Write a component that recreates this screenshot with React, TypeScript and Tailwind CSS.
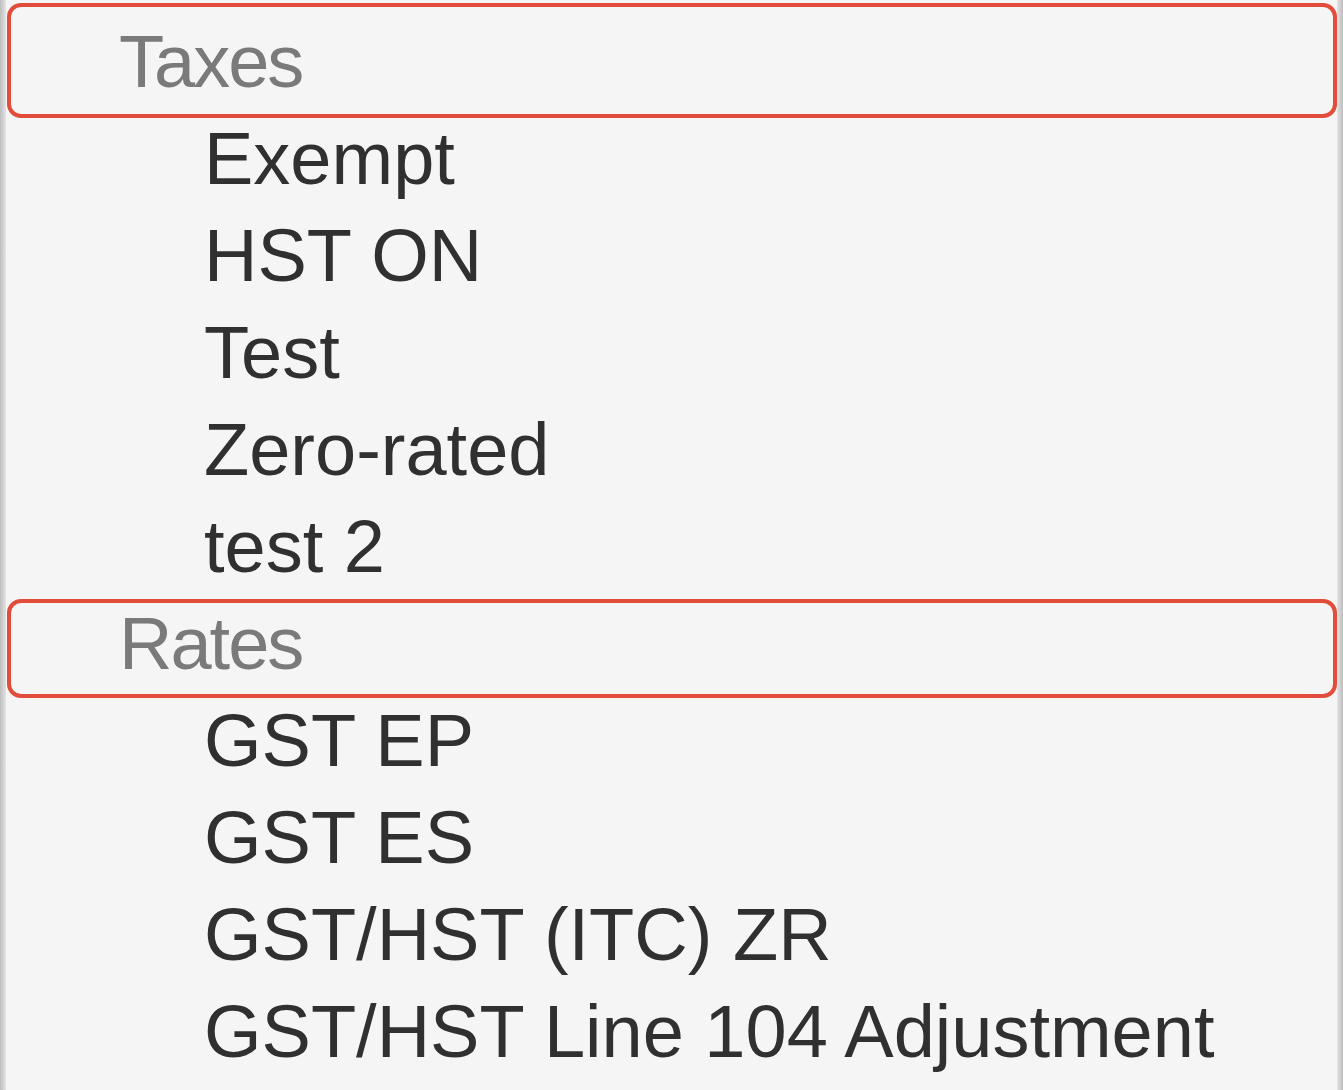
import React from 'react'

interface Section {
  title: string
  items: string[]
  // where the red annotation frame sits around the header row
  frame: { top: number; bottom: number }
}

const sections: Section[] = [
  {
    title: 'Taxes',
    items: ['Exempt', 'HST ON', 'Test', 'Zero-rated', 'test 2'],
    frame: { top: -10, bottom: -8 },
  },
  {
    title: 'Rates',
    items: ['GST EP', 'GST ES', 'GST/HST (ITC) ZR', 'GST/HST Line 104 Adjustment'],
    frame: { top: 4, bottom: -6 },
  },
]

function Header({ title, frame }: { title: string; frame: Section['frame'] }) {
  return (
    <div className="relative h-[97px] leading-[97px] pl-[113px] text-[74px] tracking-[-2px] text-[#7a7a7a]">
      {title}
      <span
        className="pointer-events-none absolute left-[1px] right-0 rounded-[14px] border-[4px] border-[#e24c3b]"
        style={{ top: frame.top, bottom: frame.bottom }}
      />
    </div>
  )
}

export default function App() {
  return (
    <div
      className="flex w-[1343px] h-[1090px] overflow-hidden bg-[#f5f5f5]"
      style={{ fontFamily: '"Liberation Sans", Arial, sans-serif' }}
    >
      <div className="w-[6px] shrink-0 bg-gradient-to-r from-[#bdbdbd] to-[#e4e4e4]" />
      <div className="flex-1 pt-[13px]">
        {sections.map((s) => (
          <div key={s.title}>
            <Header title={s.title} frame={s.frame} />
            {s.items.map((item) => (
              <div key={item} className="h-[97px] leading-[97px] pl-[198px] text-[74px] text-[#303030] whitespace-nowrap">
                {item}
              </div>
            ))}
          </div>
        ))}
      </div>
      <div className="w-[6px] shrink-0 bg-gradient-to-r from-[#e4e4e4] to-[#bdbdbd]" />
    </div>
  )
}
